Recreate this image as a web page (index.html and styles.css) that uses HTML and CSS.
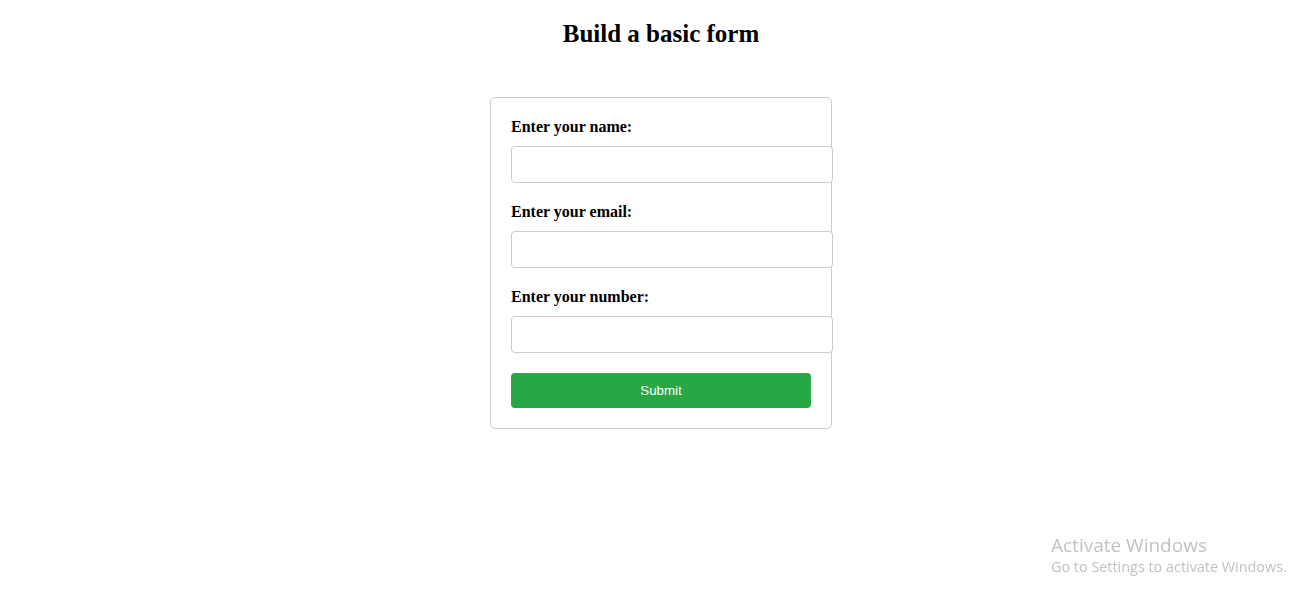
FILE: index.html
```html
<!DOCTYPE html>
<html lang="en">
<head>
<meta charset="UTF-8">
<title>Build a basic form</title>
<link rel="stylesheet" href="styles.css">
</head>
<body>
<div class="page">
  <h2 class="title">Build a basic form</h2>
  <form class="card">
    <label class="label" for="name">Enter your name:</label>
    <input class="field" type="text" id="name">
    <label class="label" for="email">Enter your email:</label>
    <input class="field" type="email" id="email">
    <label class="label" for="number">Enter your number:</label>
    <input class="field" type="text" id="number">
    <button class="submit" type="button">Submit</button>
  </form>
</div>
<div class="watermark">
  <div class="wm-title">Activate Windows</div>
  <div class="wm-sub">Go to Settings to activate Windows.</div>
</div>
</body>
</html>
```

FILE: styles.css
```css
body {
  margin: 8px;
  font-family: "Liberation Serif", "Times New Roman", serif;
  color: #000;
  background: #fff;
}

.page {
  padding-left: 24px;
}

.title {
  font-size: 25px;
  font-weight: bold;
  text-align: center;
  margin: 12px 0 20px;
}

.card {
  width: 300px;
  margin: 49px auto 0;
  padding: 20px;
  border: 1px solid #ccc;
  border-radius: 5px;
}

.label {
  display: block;
  font-weight: bold;
  font-size: 16px;
  margin-bottom: 10px;
}

.field {
  display: block;
  width: 100%;
  padding: 10px;
  margin: 0 0 20px;
  border: 1px solid #ccc;
  border-radius: 4px;
  font-family: "Liberation Sans", Arial, sans-serif;
  font-size: 13.333px;
  line-height: 15px;
  box-sizing: content-box;
  height: 15px;
}

.submit {
  display: block;
  width: 100%;
  height: 35px;
  padding: 10px;
  border: none;
  border-radius: 4px;
  background: #28a745;
  color: #fff;
  font-family: "Liberation Sans", Arial, sans-serif;
  font-size: 13.333px;
  line-height: 15px;
  cursor: pointer;
}

.watermark {
  position: fixed;
  left: 1051px;
  top: 533px;
  color: #c2c2c2;
  font-family: "Open Sans", "Noto Sans", sans-serif;
}

.wm-title {
  font-size: 19px;
  line-height: 24px;
}

.wm-sub {
  font-size: 14.4px;
  line-height: 20px;
}
```
